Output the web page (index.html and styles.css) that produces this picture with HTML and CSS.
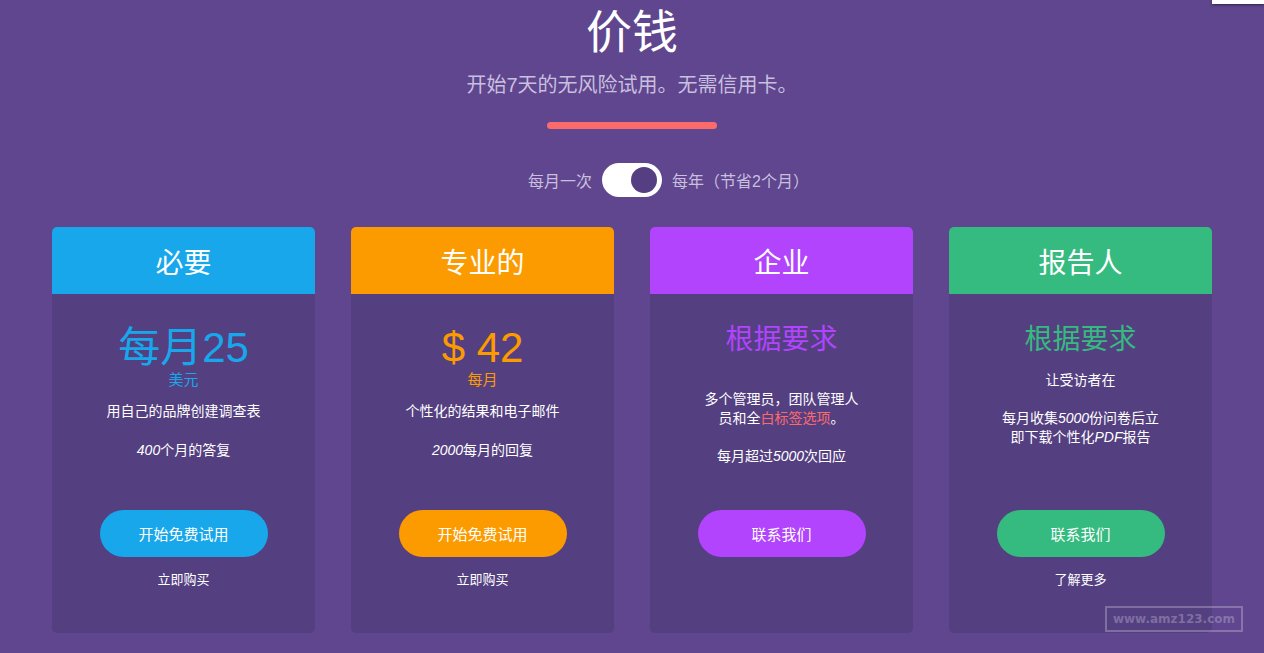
FILE: index.html
```html
<!DOCTYPE html>
<html lang="zh">
<head>
<meta charset="utf-8">
<link rel="stylesheet" href="styles.css">
</head>
<body>
<div class="page">
  <header class="hero">
    <h1 class="title">价钱</h1>
    <p class="subtitle">开始7天的无风险试用。无需信用卡。</p>
    <div class="bar"></div>
    <div class="switch-row">
      <span class="switch-label left">每月一次</span>
      <span class="switch"><span class="knob"></span></span>
      <span class="switch-label">每年（节省2个月）</span>
    </div>
  </header>

  <section class="cards">
    <div class="card blue">
      <div class="card-head">必要</div>
      <div class="card-body">
        <div class="info">
          <div class="price">每月25</div>
          <div class="unit">美元</div>
          <p class="feat f1">用自己的品牌创建调查表</p>
          <p class="feat f2"><i>400</i>个月的答复</p>
        </div>
        <div class="actions">
          <a class="btn">开始免费试用</a>
          <a class="link">立即购买</a>
        </div>
      </div>
    </div>

    <div class="card orange">
      <div class="card-head">专业的</div>
      <div class="card-body">
        <div class="info">
          <div class="price">$ 42</div>
          <div class="unit">每月</div>
          <p class="feat f1">个性化的结果和电子邮件</p>
          <p class="feat f2"><i>2000</i>每月的回复</p>
        </div>
        <div class="actions">
          <a class="btn">开始免费试用</a>
          <a class="link">立即购买</a>
        </div>
      </div>
    </div>

    <div class="card purple">
      <div class="card-head">企业</div>
      <div class="card-body">
        <div class="info">
          <div class="price small">根据要求</div>
          <p class="feat f3">多个管理员，团队管理人员和全<span class="hl">白标签选项</span>。</p>
          <p class="feat f4">每月超过<i>5000</i>次回应</p>
        </div>
        <div class="actions">
          <a class="btn">联系我们</a>
        </div>
      </div>
    </div>

    <div class="card green">
      <div class="card-head">报告人</div>
      <div class="card-body">
        <div class="info">
          <div class="price small">根据要求</div>
          <p class="feat f5">让受访者在</p>
          <p class="feat f4">每月收集<i>5000</i>份问卷后立即下载个性化<i>PDF</i>报告</p>
        </div>
        <div class="actions">
          <a class="btn">联系我们</a>
          <a class="link">了解更多</a>
        </div>
      </div>
    </div>
  </section>
</div>
<div class="corner"></div>
<div class="watermark">www.amz123.com</div>
</body>
</html>
```

FILE: styles.css
```css
* { box-sizing: border-box; }
html, body {
  margin: 0;
  padding: 0;
  height: 100%;
  overflow: hidden;
}
body {
  background: #5f468e;
  font-family: "Liberation Sans", "Noto Sans CJK SC", sans-serif;
  color: #fff;
}
.page {
  display: flex;
  flex-direction: column;
  align-items: center;
}
.hero {
  width: 100%;
  display: flex;
  flex-direction: column;
  align-items: center;
}
.title {
  margin: 2px 0 0;
  font-size: 46px;
  font-weight: normal;
  line-height: 60px;
}
.subtitle {
  margin: 10px 0 0;
  font-size: 20px;
  line-height: 26px;
  color: #c9bfdf;
}
.bar {
  margin-top: 24px;
  width: 170px;
  height: 7px;
  border-radius: 4px;
  background: #fc6b6c;
}
.switch-row {
  width: 100%;
  margin-top: 34px;
  display: grid;
  grid-template-columns: 1fr auto 1fr;
  align-items: center;
  column-gap: 10px;
}
.switch-label {
  font-size: 16px;
  color: #c9bfdf;
}
.switch-label.left { justify-self: end; }
.switch {
  width: 60px;
  height: 34px;
  border-radius: 17px;
  background: #fff;
  display: flex;
  align-items: center;
  justify-content: flex-end;
  padding-right: 5px;
}
.knob {
  width: 26px;
  height: 26px;
  border-radius: 50%;
  background: #553f82;
}
.cards {
  margin-top: 30px;
  display: flex;
  gap: 36px;
}
.card {
  width: 263px;
  height: 406px;
  display: flex;
  flex-direction: column;
  border-radius: 5px;
  overflow: hidden;
  background: #543f81;
}
.card-head {
  height: 67px;
  display: flex;
  align-items: center;
  justify-content: center;
  font-size: 28px;
  color: #fff;
}
.blue .card-head { background: #17a7ea; }
.orange .card-head { background: #fb9b00; }
.purple .card-head { background: #b144fc; }
.green .card-head { background: #35bb7f; }
.blue .price, .blue .unit { color: #17a7ea; }
.orange .price, .orange .unit { color: #fb9b00; }
.purple .price { color: #b144fc; }
.green .price { color: #35bb7f; }
.card-body {
  flex: 1;
  display: flex;
  flex-direction: column;
  align-items: center;
  padding: 31px 0 44px;
}
.info {
  width: 162px;
  display: flex;
  flex-direction: column;
  align-items: center;
  text-align: center;
}
.price {
  font-size: 42px;
  line-height: 46px;
  white-space: nowrap;
}
.price.small {
  font-size: 28px;
  margin-top: -8px;
}
.unit {
  font-size: 15px;
  line-height: 18px;
}
.feat {
  margin: 0;
  font-size: 14px;
  line-height: 19px;
  color: #fff;
}
.feat i { font-style: italic; }
.f1 { margin-top: 13px; }
.f2 { margin-top: 20px; }
.f3 { margin-top: 27px; }
.f4 { margin-top: 19px; }
.f5 { margin-top: 8px; }
.hl { color: #fc6b6c; }
.actions {
  margin-top: auto;
  display: flex;
  flex-direction: column;
  align-items: center;
  gap: 14px;
  min-height: 79px;
}
.btn {
  width: 168px;
  height: 47px;
  border-radius: 24px;
  display: flex;
  align-items: center;
  justify-content: center;
  font-size: 15px;
  color: #fff;
}
.blue .btn { background: #17a7ea; }
.orange .btn { background: #fb9b00; }
.purple .btn { background: #b144fc; }
.green .btn { background: #35bb7f; }
.link {
  font-size: 13px;
  line-height: 18px;
  color: #fff;
}
.corner {
  position: absolute;
  top: 0;
  right: 0;
  width: 52px;
  height: 4px;
  background: #fff;
  box-shadow: 0 1px 3px rgba(0,0,0,0.5);
}
.watermark {
  position: absolute;
  left: 1105px;
  top: 606px;
  width: 138px;
  height: 26px;
  border: 2px solid rgba(255,255,255,0.25);
  display: flex;
  align-items: center;
  justify-content: center;
  font-family: "DejaVu Sans", sans-serif;
  font-weight: bold;
  font-size: 12px;
  color: rgba(255,255,255,0.25);
}
```
